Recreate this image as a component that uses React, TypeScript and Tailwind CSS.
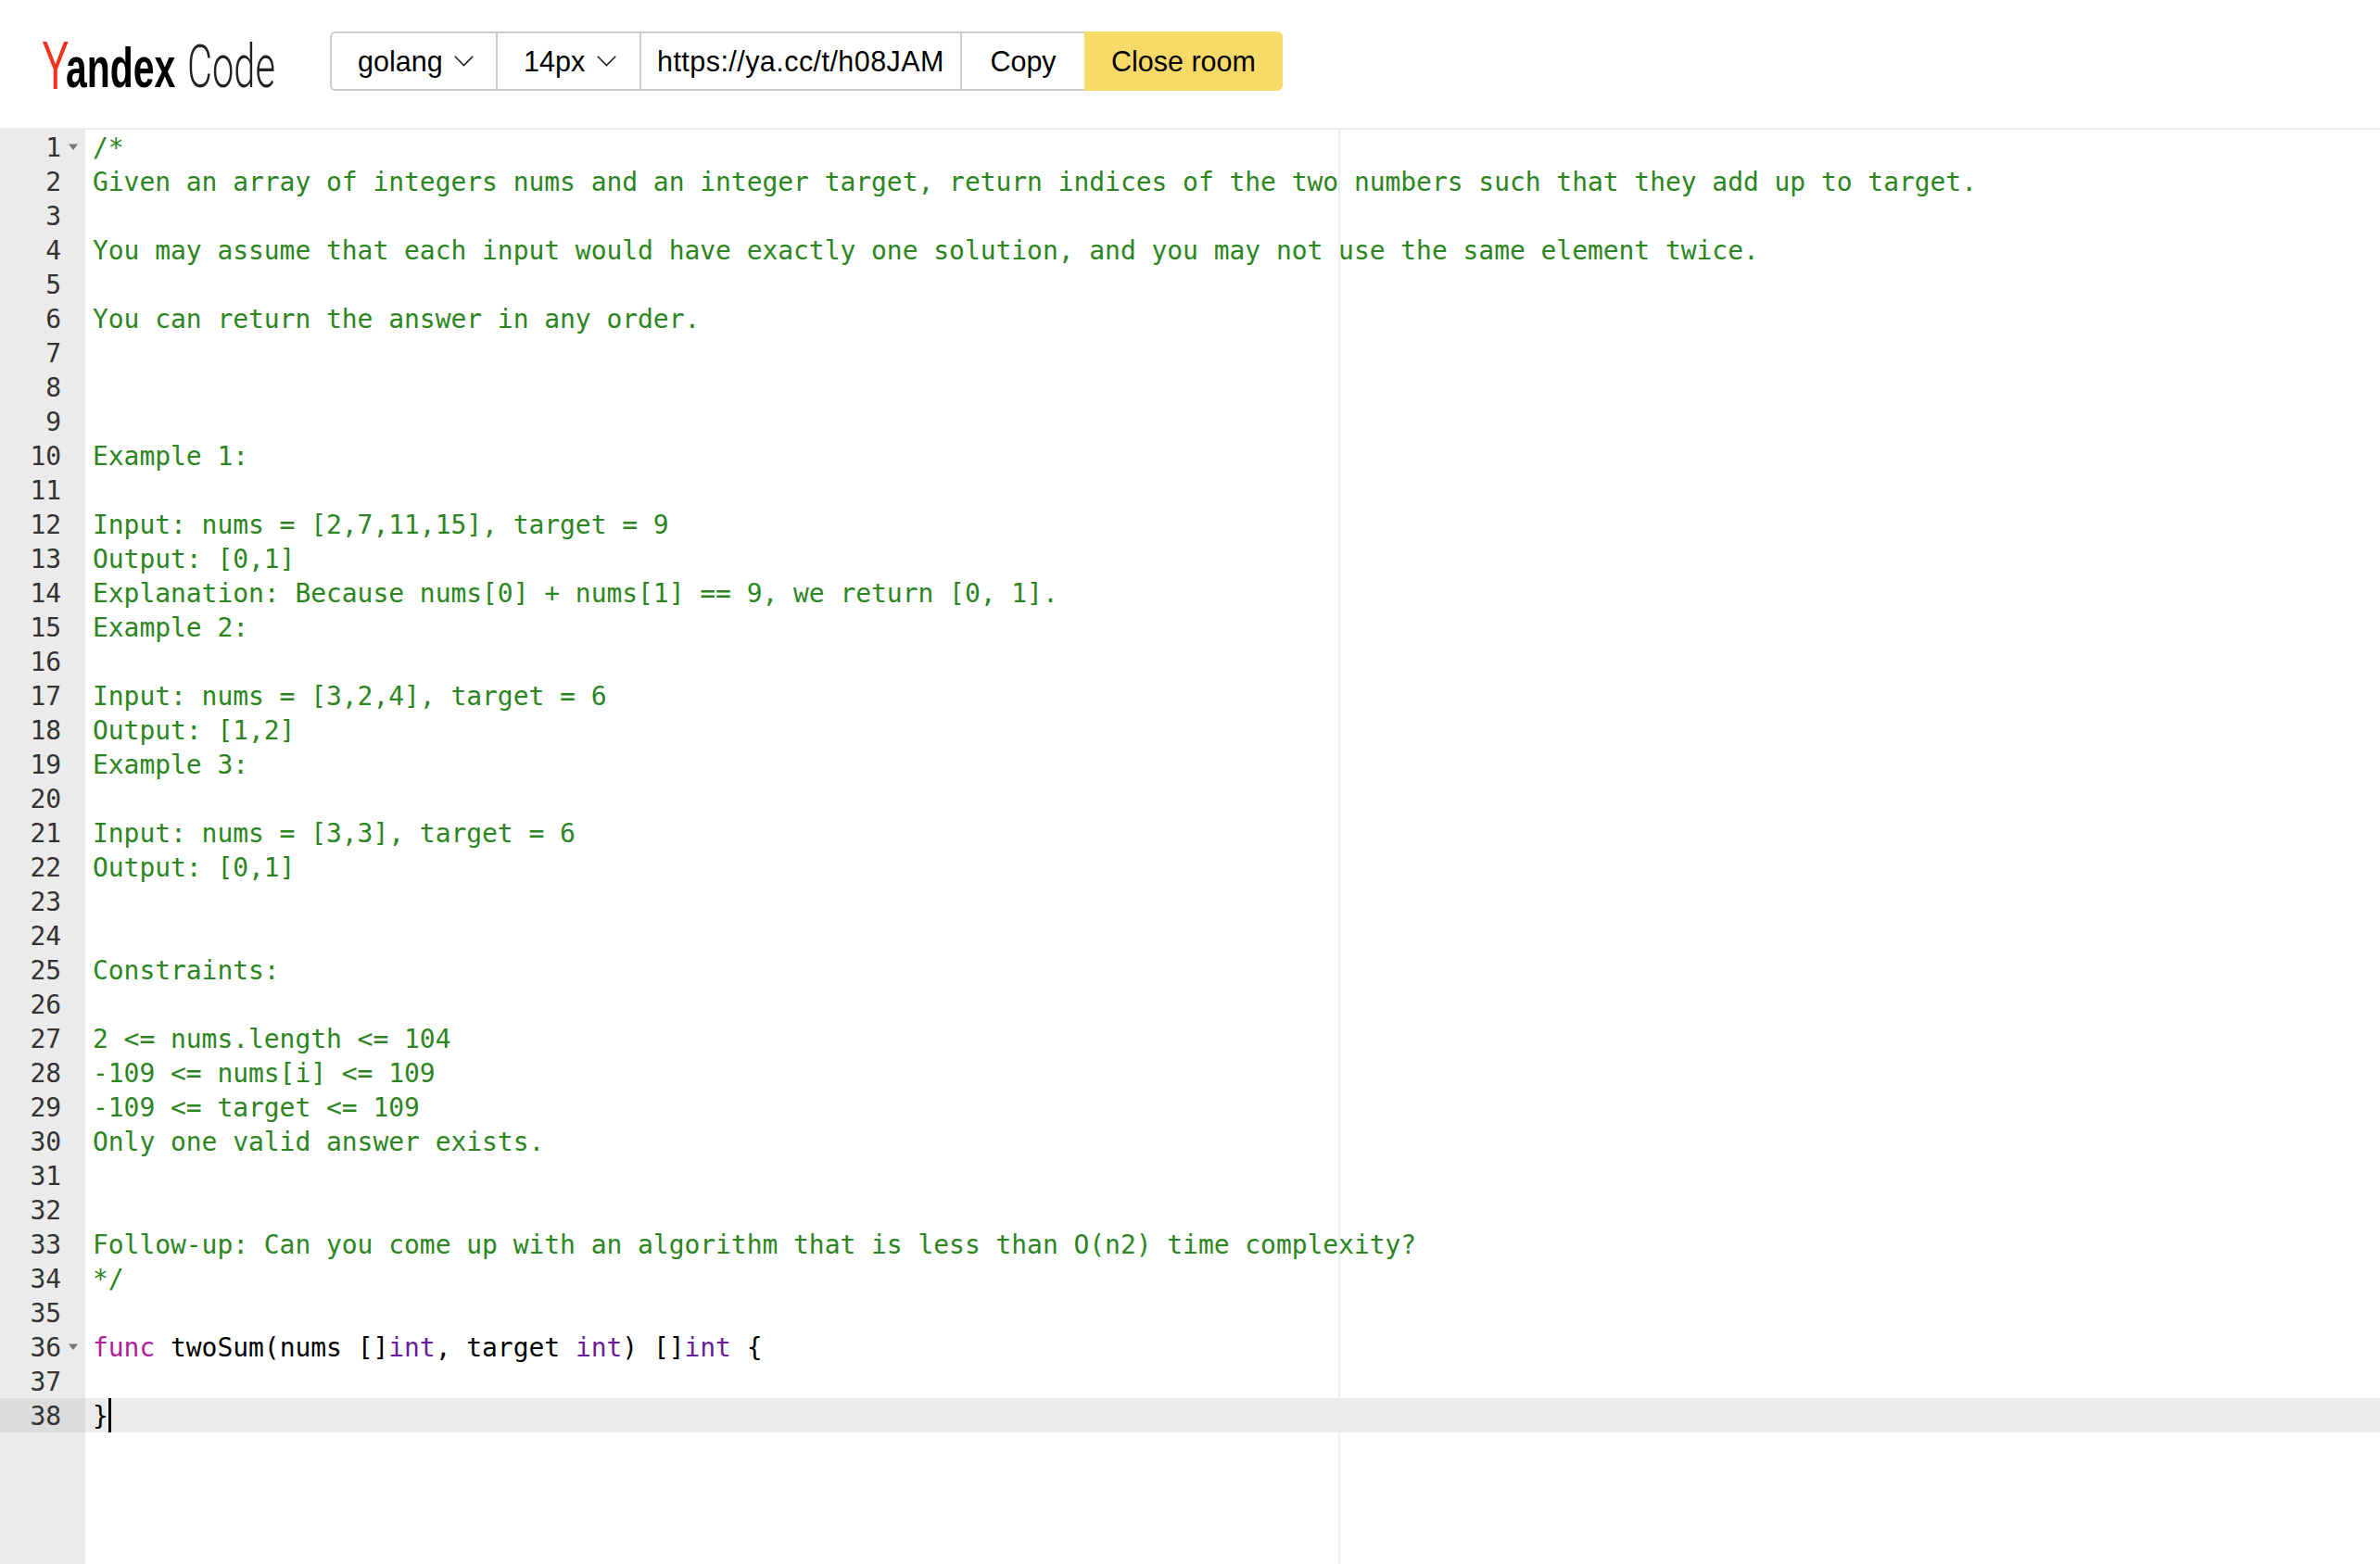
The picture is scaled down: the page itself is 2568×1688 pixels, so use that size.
type Token = { text: string; color?: string };

const comment = (text: string): Token[] => [{ text, color: "text-[#2c851e]" }];

const kw = "text-[#b0209a]";
const type = "text-[#6a1b9a]";

const lines: Token[][] = [
  comment("/*"),
  comment(
    "Given an array of integers nums and an integer target, return indices of the two numbers such that they add up to target."
  ),
  comment(""),
  comment(
    "You may assume that each input would have exactly one solution, and you may not use the same element twice."
  ),
  comment(""),
  comment("You can return the answer in any order."),
  comment(""),
  comment(""),
  comment(""),
  comment("Example 1:"),
  comment(""),
  comment("Input: nums = [2,7,11,15], target = 9"),
  comment("Output: [0,1]"),
  comment("Explanation: Because nums[0] + nums[1] == 9, we return [0, 1]."),
  comment("Example 2:"),
  comment(""),
  comment("Input: nums = [3,2,4], target = 6"),
  comment("Output: [1,2]"),
  comment("Example 3:"),
  comment(""),
  comment("Input: nums = [3,3], target = 6"),
  comment("Output: [0,1]"),
  comment(""),
  comment(""),
  comment("Constraints:"),
  comment(""),
  comment("2 <= nums.length <= 104"),
  comment("-109 <= nums[i] <= 109"),
  comment("-109 <= target <= 109"),
  comment("Only one valid answer exists."),
  comment(""),
  comment(""),
  comment(
    "Follow-up: Can you come up with an algorithm that is less than O(n2) time complexity?"
  ),
  comment("*/"),
  [],
  [
    { text: "func", color: kw },
    { text: " twoSum(nums []" },
    { text: "int", color: type },
    { text: ", target " },
    { text: "int", color: type },
    { text: ") []" },
    { text: "int", color: type },
    { text: " {" },
  ],
  [],
  [{ text: "}" }],
];

const foldLines = [1, 36];
const activeLine = 38;

const Chevron = () => (
  <svg width="21" height="12" viewBox="0 0 21 12" fill="none">
    <path d="M0.8 0.8L10.5 10.6L20.2 0.8" stroke="#222" strokeWidth="1.6" />
  </svg>
);

const Logo = () => (
  <div className="ml-[45px] -mt-[2px] flex h-[70px] w-[311px] shrink-0 items-baseline whitespace-nowrap leading-none text-black">
    <span className="inline-block w-[26px] origin-left translate-y-[2px] scale-x-[0.6] text-[74px] text-[#f0321e]">
      Y
    </span>
    <span className="inline-block w-[131px] origin-left scale-x-[0.66] text-[62px] font-bold">
      andex
    </span>
    <span className="inline-block origin-left scale-x-[0.64] font-['Roboto',sans-serif] text-[65px] font-light text-[#222]">
      Code
    </span>
  </div>
);

const Header = () => (
  <header className="flex h-[138px] items-start bg-white pt-[34px] font-['Liberation_Sans',Arial,sans-serif]">
    <Logo />
    <div className="flex h-[64px] items-center text-[30.5px] leading-none text-black">
      <div className="flex h-full items-center rounded-l-[6px] border-y-2 border-l-2 border-[#cccccc]">
        <div className="flex h-full w-[179px] items-center gap-[12px] border-r-2 border-[#cccccc] pl-[28px]">
          <span>golang</span>
          <Chevron />
        </div>
        <div className="flex h-full w-[155px] items-center gap-[13px] border-r-2 border-[#cccccc] pl-[28px]">
          <span>14px</span>
          <Chevron />
        </div>
        <div className="flex h-full w-[346px] items-center justify-center border-r-2 border-[#cccccc] tracking-[0.45px]">
          https://ya.cc/t/h08JAM
        </div>
        <div className="flex h-full w-[132px] items-center justify-center">
          Copy
        </div>
      </div>
      <button className="flex h-full w-[214px] items-center justify-center rounded-r-[6px] bg-[#f8da68]">
        Close room
      </button>
    </div>
  </header>
);

const Gutter = () => (
  <div className="w-[92px] shrink-0 bg-[#ebebeb] text-[#333]">
    {lines.map((_, i) => {
      const n = i + 1;
      return (
        <div
          key={n}
          className={
            "relative h-[37px] pr-[26px] text-right " +
            (n === activeLine ? "bg-[#dcdcdc]" : "")
          }
        >
          {n}
          {foldLines.includes(n) && (
            <svg
              className="absolute left-[73px] top-[15px]"
              width="12"
              height="8"
              viewBox="0 0 12 8"
            >
              <path d="M1 0.5h10L6 7z" fill="#777" />
            </svg>
          )}
        </div>
      );
    })}
  </div>
);

const Code = () => (
  <div className="relative min-w-0 flex-1">
    {/* Print margin */}
    <div className="absolute bottom-0 left-[1352px] top-0 w-[2px] bg-[#eeeeee]" />
    {lines.map((tokens, i) => (
      <div
        key={i}
        className={
          "relative h-[37px] whitespace-pre pl-[8px] " +
          (i + 1 === activeLine ? "bg-[#ebebeb]" : "")
        }
      >
        {tokens.map((t, j) => (
          <span key={j} className={t.color ?? "text-black"}>
            {t.text}
          </span>
        ))}
        {i + 1 === activeLine && (
          <span className="absolute left-[25px] top-0 h-[37px] w-[3px] bg-black" />
        )}
      </div>
    ))}
  </div>
);

const App = () => (
  <div className="flex h-[1688px] w-[2568px] flex-col overflow-hidden bg-white">
    <Header />
    <div className="flex flex-1 border-t-2 border-[#eeeeee] font-['DejaVu_Sans_Mono',monospace] text-[28px] leading-[39px] tracking-[-0.056px]">
      <Gutter />
      <Code />
    </div>
  </div>
);

export default App;
